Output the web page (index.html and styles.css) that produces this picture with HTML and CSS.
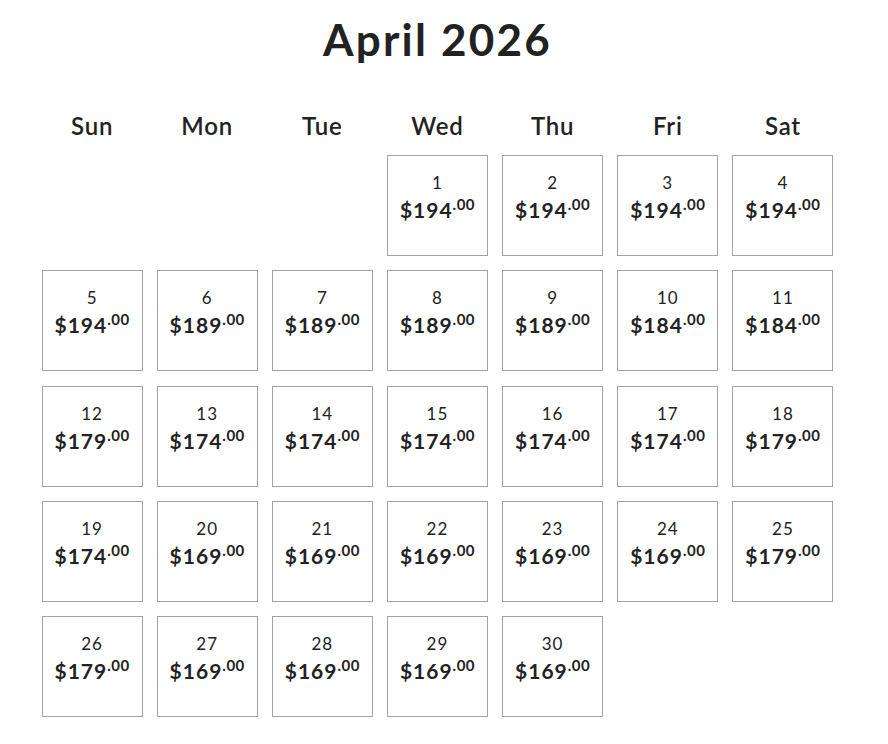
FILE: index.html
```html
<!DOCTYPE html>
<html lang="en">
<head>
<meta charset="utf-8">
<title>April 2026</title>
<link rel="stylesheet" href="styles.css">
</head>
<body>
<div class="page">
  <h1 class="title">April 2026</h1>
  <div class="calendar">
    <div class="dow">Sun</div><div class="dow">Mon</div><div class="dow">Tue</div><div class="dow">Wed</div><div class="dow">Thu</div><div class="dow">Fri</div><div class="dow">Sat</div>

    <div class="blank"></div><div class="blank"></div><div class="blank"></div>
    <div class="day"><span class="num">1</span><span class="price">$194<sup>.00</sup></span></div>
    <div class="day"><span class="num">2</span><span class="price">$194<sup>.00</sup></span></div>
    <div class="day"><span class="num">3</span><span class="price">$194<sup>.00</sup></span></div>
    <div class="day"><span class="num">4</span><span class="price">$194<sup>.00</sup></span></div>

    <div class="day"><span class="num">5</span><span class="price">$194<sup>.00</sup></span></div>
    <div class="day"><span class="num">6</span><span class="price">$189<sup>.00</sup></span></div>
    <div class="day"><span class="num">7</span><span class="price">$189<sup>.00</sup></span></div>
    <div class="day"><span class="num">8</span><span class="price">$189<sup>.00</sup></span></div>
    <div class="day"><span class="num">9</span><span class="price">$189<sup>.00</sup></span></div>
    <div class="day"><span class="num">10</span><span class="price">$184<sup>.00</sup></span></div>
    <div class="day"><span class="num">11</span><span class="price">$184<sup>.00</sup></span></div>

    <div class="day"><span class="num">12</span><span class="price">$179<sup>.00</sup></span></div>
    <div class="day"><span class="num">13</span><span class="price">$174<sup>.00</sup></span></div>
    <div class="day"><span class="num">14</span><span class="price">$174<sup>.00</sup></span></div>
    <div class="day"><span class="num">15</span><span class="price">$174<sup>.00</sup></span></div>
    <div class="day"><span class="num">16</span><span class="price">$174<sup>.00</sup></span></div>
    <div class="day"><span class="num">17</span><span class="price">$174<sup>.00</sup></span></div>
    <div class="day"><span class="num">18</span><span class="price">$179<sup>.00</sup></span></div>

    <div class="day"><span class="num">19</span><span class="price">$174<sup>.00</sup></span></div>
    <div class="day"><span class="num">20</span><span class="price">$169<sup>.00</sup></span></div>
    <div class="day"><span class="num">21</span><span class="price">$169<sup>.00</sup></span></div>
    <div class="day"><span class="num">22</span><span class="price">$169<sup>.00</sup></span></div>
    <div class="day"><span class="num">23</span><span class="price">$169<sup>.00</sup></span></div>
    <div class="day"><span class="num">24</span><span class="price">$169<sup>.00</sup></span></div>
    <div class="day"><span class="num">25</span><span class="price">$179<sup>.00</sup></span></div>

    <div class="day"><span class="num">26</span><span class="price">$179<sup>.00</sup></span></div>
    <div class="day"><span class="num">27</span><span class="price">$169<sup>.00</sup></span></div>
    <div class="day"><span class="num">28</span><span class="price">$169<sup>.00</sup></span></div>
    <div class="day"><span class="num">29</span><span class="price">$169<sup>.00</sup></span></div>
    <div class="day"><span class="num">30</span><span class="price">$169<sup>.00</sup></span></div>
  </div>
</div>
</body>
</html>
```

FILE: styles.css
```css
html, body {
  margin: 0;
  padding: 0;
  background: #fff;
}

body {
  font-family: Lato, "Noto Sans", sans-serif;
  color: #222;
}

.page {
  width: 875px;
  padding-bottom: 27px;
  display: flex;
  flex-direction: column;
  align-items: center;
}

.title {
  margin: 14px 0 0;
  font-size: 44px;
  line-height: 50px;
  font-weight: 700;
  letter-spacing: 2.2px;
}

.calendar {
  width: 806px;
  margin-top: 44px;
  display: grid;
  grid-template-columns: repeat(7, 1fr);
  grid-template-rows: 32.75px;
  grid-auto-rows: 101px;
  row-gap: 14.25px;
  justify-items: center;
}

.dow {
  align-self: start;
  font-size: 24px;
  line-height: 36px;
  height: 32.75px;
  font-weight: 600;
  letter-spacing: 0.8px;
}

.day, .blank {
  width: 101px;
  height: 101px;
  box-sizing: border-box;
}

.day {
  border: 1px solid #a3a3a3;
  display: flex;
  flex-direction: column;
  align-items: center;
  padding-top: 17px;
}

.num {
  font-size: 17px;
  line-height: 20px;
  font-weight: 400;
  letter-spacing: 1px;
}

.price {
  margin-top: 4px;
  font-size: 21px;
  line-height: 26px;
  font-weight: 700;
  letter-spacing: 1px;
}

.price sup {
  font-size: 15px;
  vertical-align: 0;
  position: relative;
  top: -8px;
  font-weight: 700;
  letter-spacing: 0.5px;
}
```
